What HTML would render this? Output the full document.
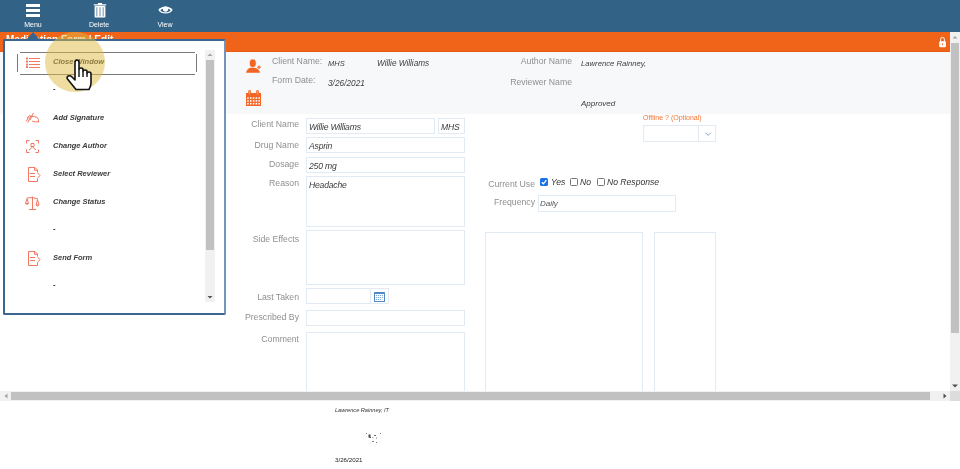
<!DOCTYPE html>
<html><head><meta charset="utf-8">
<style>
*{margin:0;padding:0;box-sizing:border-box}
body{will-change:transform}
html,body{width:960px;height:469px;overflow:hidden;background:#fff;font-family:"Liberation Sans",sans-serif}
.a{position:absolute}
svg{display:block}
#top{left:0;top:0;width:960px;height:32px;background:#336287}
.tl{position:absolute;top:21px;color:#fff;font-size:7px;line-height:8px;text-align:center;width:40px}
#orange{left:0;top:32px;width:950px;height:20px;background:#f0641a;border-bottom:1px solid #e95c12}
#title{left:6px;top:34px;color:#fff;font-size:10px;font-weight:bold;line-height:12px;white-space:nowrap}
#band{left:0;top:52px;width:950px;height:62px;background:#f7f8fa}
.lbl{position:absolute;color:#8f8f8f;font-size:8.7px;line-height:10px;white-space:nowrap}
.rl{text-align:right}
.val{position:absolute;color:#404040;font-style:italic;font-size:8px;line-height:10px;white-space:nowrap}
.inp{position:absolute;border:1px solid #e2eaf4;background:#fff}
.it{position:absolute;color:#3a3a3a;font-style:italic;font-size:8.6px;letter-spacing:-0.2px;line-height:10px;white-space:nowrap}
/* scrollbars */
#vs{left:950px;top:32px;width:10px;height:359px;background:#f1f1f1}
#hs{left:0;top:391px;width:950px;height:10px;background:#f1f1f1}
#corner{left:950px;top:391px;width:10px;height:10px;background:#dcdcdc}
/* popup */
#pop{left:3px;top:39px;width:223px;height:276px;background:#fff;border:2px solid #3a6691;border-right-color:#7296bb;border-radius:2px}
.mi{position:absolute;left:50px;color:#3b3b3b;font-style:italic;font-weight:bold;font-size:7.5px;line-height:10px;white-space:nowrap}
</style></head><body>
<div id="top" class="a">
 <svg class="a" style="left:26px;top:4px" width="14" height="13"><rect x="0" y="0" width="14" height="3" fill="#fff"/><rect x="0" y="5" width="14" height="3" fill="#fff"/><rect x="0" y="10" width="14" height="3" fill="#fff"/></svg>
 <div class="tl" style="left:13px">Menu</div>
 <svg class="a" style="left:93px;top:3px" width="14" height="15" viewBox="0 0 14 15"><path d="M5 0h4v1.2h-4z M0.8 1.2h12.4v1.4H0.8z" fill="#fff"/><rect x="1.6" y="3" width="10.8" height="11.5" rx="0.8" fill="#fff"/><rect x="3.2" y="4.2" width="1.2" height="9.2" fill="#8aa3ba"/><rect x="6.4" y="4.2" width="1.2" height="9.2" fill="#8aa3ba"/><rect x="9.6" y="4.2" width="1.2" height="9.2" fill="#8aa3ba"/></svg>
 <div class="tl" style="left:79px">Delete</div>
 <svg class="a" style="left:158px;top:5px" width="15" height="10" viewBox="0 0 15 10"><path d="M0.3 5C3 0.3 12 0.3 14.7 5C12 9.7 3 9.7 0.3 5Z" fill="#fff"/><path d="M2.3 5.2C4.2 2.8 10.8 2.8 12.7 5.2C10.8 7.9 4.2 7.9 2.3 5.2Z" fill="#336287"/><path d="M4.7 3.2A2.9 2.9 0 0 0 10.3 3.2Z" fill="#fff"/><circle cx="7.5" cy="4.1" r="2.6" fill="#fff"/></svg>
 <div class="tl" style="left:145px">View</div>
</div>
<div id="orange" class="a">
 <svg class="a" style="left:938px;top:4px" width="9" height="12" viewBox="0 0 9 12"><path d="M2.6 6V3.3a1.9 1.9 0 0 1 3.8 0V6" stroke="#fff" stroke-width="1" fill="none"/><rect x="1.2" y="5.3" width="6.8" height="6" rx="1.3" fill="#fff"/><path d="M4 7.5h1.2l-0.3 2h-0.6z" fill="#f26522"/></svg>
</div>
<div id="title" class="a">Medication Form | Edit</div>
<div id="band" class="a">
 <svg class="a" style="left:246px;top:7px" width="16" height="14" viewBox="0 0 16 14"><path d="M0 13.8Q1 8.6 7 8.6Q13 8.6 14 13.8Z" fill="#f26522"/><ellipse cx="6.8" cy="4.2" rx="3.4" ry="4.2" fill="#f26522" stroke="#f7f8fa" stroke-width="0.7"/><path d="M11 8.2H15M13 6.2V10.2" stroke="#f7f8fa" stroke-width="2.6"/><path d="M11.2 8.2H14.8M13 6.4V10" stroke="#f47a40" stroke-width="1.5"/></svg>
 <svg class="a" style="left:246px;top:38px" width="15" height="16" viewBox="0 0 15 16"><rect x="0" y="3" width="15" height="13" fill="#f26522"/><rect x="2.6" y="0.3" width="2" height="4.6" rx="1" fill="#f4a070" stroke="#f26522" stroke-width="0.8"/><rect x="10.5" y="0.3" width="2" height="4.6" rx="1" fill="#f4a070" stroke="#f26522" stroke-width="0.8"/><g fill="#fff"><rect x="1.1" y="7.3" width="1.6" height="1.6"/><rect x="3.95" y="7.3" width="1.6" height="1.6"/><rect x="6.8" y="7.3" width="1.6" height="1.6"/><rect x="9.6" y="7.3" width="1.6" height="1.6"/><rect x="12.4" y="7.3" width="1.6" height="1.6"/><rect x="1.1" y="10.1" width="1.6" height="1.6"/><rect x="3.95" y="10.1" width="1.6" height="1.6"/><rect x="6.8" y="10.1" width="1.6" height="1.6"/><rect x="9.6" y="10.1" width="1.6" height="1.6"/><rect x="12.4" y="10.1" width="1.6" height="1.6"/><rect x="1.1" y="12.9" width="1.6" height="1.6"/><rect x="3.95" y="12.9" width="1.6" height="1.6"/><rect x="6.8" y="12.9" width="1.6" height="1.6"/><rect x="9.6" y="12.9" width="1.6" height="1.6"/><rect x="12.4" y="12.9" width="1.6" height="1.6"/></g></svg>
 <div class="lbl" style="left:272px;top:4px">Client Name:</div>
 <div class="lbl" style="left:272px;top:23px">Form Date:</div>
 <div class="val" style="left:328px;top:7px;font-size:7.5px">MHS</div>
 <div class="val" style="left:377px;top:7px;font-size:8.2px">Willie Williams</div>
 <div class="val" style="left:328px;top:26px;font-size:8.3px">3/26/2021</div>
 <div class="lbl rl" style="left:472px;top:4px;width:100px">Author Name</div>
 <div class="lbl rl" style="left:472px;top:25px;width:100px">Reviewer Name</div>
 <div class="val" style="left:581px;top:7px;font-size:7.7px">Lawrence Rainney,</div>
 <div class="val" style="left:581px;top:47px;font-size:8px">Approved</div>
</div>
<div class="a" style="left:643px;top:114px;color:#f47636;font-size:7px;line-height:8px;white-space:nowrap">Offline ? (Optional)</div>
<div class="inp" style="left:643px;top:125px;width:73px;height:17px"><div class="a" style="left:54px;top:0;width:1px;height:15px;background:#e3e9f0"></div><svg class="a" style="left:61px;top:6px" width="7" height="5"><path d="M0.5 0.7L3.2 3.4L5.9 0.7" stroke="#7f9fc0" stroke-width="0.9" fill="none"/></svg></div>

<div class="a" style="left:0;top:0;width:950px;height:391px;overflow:hidden">
<div class="lbl rl" style="left:199px;top:119px;width:100px">Client Name</div>
<div class="inp" style="left:306px;top:118px;width:129px;height:16px"></div>
<div class="it" style="left:309px;top:122px">Willie Williams</div>
<div class="inp" style="left:438px;top:118px;width:27px;height:16px"></div>
<div class="it" style="left:441px;top:122px">MHS</div>
<div class="lbl rl" style="left:199px;top:140px;width:100px">Drug Name</div>
<div class="inp" style="left:306px;top:137px;width:159px;height:16px"></div>
<div class="it" style="left:309px;top:141px">Asprin</div>
<div class="lbl rl" style="left:199px;top:159px;width:100px">Dosage</div>
<div class="inp" style="left:306px;top:157px;width:159px;height:16px"></div>
<div class="it" style="left:309px;top:161px">250 mg</div>
<div class="lbl rl" style="left:199px;top:178px;width:100px">Reason</div>
<div class="inp" style="left:306px;top:176px;width:159px;height:51px"></div>
<div class="it" style="left:309px;top:180px">Headache</div>
<div class="lbl rl" style="left:199px;top:234px;width:100px">Side Effects</div>
<div class="inp" style="left:306px;top:230px;width:159px;height:55px"></div>
<div class="lbl rl" style="left:199px;top:292px;width:100px">Last Taken</div>
<div class="inp" style="left:306px;top:288px;width:65px;height:16px"></div>
<div class="inp" style="left:370px;top:288px;width:19px;height:16px"></div>
<div class="lbl rl" style="left:199px;top:312px;width:100px">Prescribed By</div>
<div class="inp" style="left:306px;top:310px;width:159px;height:16px"></div>
<div class="lbl rl" style="left:199px;top:334px;width:100px">Comment</div>
<div class="inp" style="left:306px;top:332px;width:159px;height:80px"></div>

<div class="lbl rl" style="left:435px;top:179px;width:100px">Current Use</div>

<svg class="a" style="left:540px;top:178px" width="9" height="8" viewBox="0 0 9 8"><rect x="0" y="0" width="8" height="8" rx="1.5" fill="#1a73e8"/><path d="M1.8 4.2L3.4 5.8L6.4 2.2" stroke="#fff" stroke-width="1.3" fill="none"/></svg>
<div class="it" style="left:551px;top:177px;font-size:8.6px;letter-spacing:0;color:#333">Yes</div>
<div class="a" style="left:570px;top:178px;width:8px;height:8px;border:1px solid #767676;border-radius:1.5px"></div>
<div class="it" style="left:580px;top:177px;font-size:8.6px;letter-spacing:0;color:#333">No</div>
<div class="a" style="left:597px;top:178px;width:8px;height:8px;border:1px solid #767676;border-radius:1.5px"></div>
<div class="it" style="left:607px;top:177px;font-size:8.6px;letter-spacing:0;color:#333">No Response</div>
<svg class="a" style="left:374px;top:292px" width="11" height="10" viewBox="0 0 11 10"><rect x="0" y="0" width="11" height="10" rx="0.5" fill="#5289c2"/><rect x="1" y="2" width="9" height="7" fill="#fff"/><g fill="#7aa6d2"><rect x="1.8" y="3" width="1.2" height="1"/><rect x="3.8" y="3" width="1.2" height="1"/><rect x="5.8" y="3" width="1.2" height="1"/><rect x="7.8" y="3" width="1.2" height="1"/><rect x="1.8" y="5" width="1.2" height="1"/><rect x="3.8" y="5" width="1.2" height="1"/><rect x="5.8" y="5" width="1.2" height="1"/><rect x="7.8" y="5" width="1.2" height="1"/><rect x="1.8" y="7" width="1.2" height="1"/><rect x="3.8" y="7" width="1.2" height="1"/><rect x="5.8" y="7" width="1.2" height="1"/></g></svg>
<div class="lbl rl" style="left:435px;top:197px;width:100px">Frequency</div>
<div class="inp" style="left:538px;top:195px;width:138px;height:17px"></div>
<div class="it" style="left:540px;top:199px;font-size:8px;letter-spacing:0;color:#555">Daily</div>
<div class="inp" style="left:485px;top:232px;width:158px;height:180px"></div>
<div class="inp" style="left:654px;top:232px;width:62px;height:180px"></div>

</div>
<div id="vs" class="a"></div>
<div id="hs" class="a"></div>
<div id="corner" class="a"></div>

<div class="a" style="left:1px;top:392px;width:10px;height:8px"><svg width="10" height="8"><path d="M6.5 1.5L3.5 4L6.5 6.5Z" fill="#a3a3a3"/></svg></div>
<div class="a" style="left:11px;top:392px;width:919px;height:8px;background:#c1c1c1"></div>
<div class="a" style="left:940px;top:392px;width:10px;height:8px"><svg width="10" height="8"><path d="M3.5 1.5L6.5 4L3.5 6.5Z" fill="#505050"/></svg></div>
<div class="a" style="left:950px;top:32px;width:10px;height:10px"><svg width="10" height="10"><path d="M2.5 6.5L5 4L7.5 6.5Z" fill="#a3a3a3"/></svg></div>
<div class="a" style="left:951px;top:43px;width:8px;height:290px;background:#c1c1c1"></div>
<div class="a" style="left:950px;top:381px;width:10px;height:10px"><svg width="10" height="10"><path d="M2 3.5L5 6.5L8 3.5Z" fill="#505050"/></svg></div>

<div class="a" style="left:335px;top:406px;color:#333;font-style:italic;font-size:5.6px;line-height:8px;white-space:nowrap">Lawrence Rainney, IT</div>
<svg class="a" style="left:360px;top:428px" width="26" height="20" viewBox="0 0 26 20">
<g fill="#222"><rect x="6" y="5" width="1" height="1" opacity="0.6"/><rect x="8.5" y="6.5" width="2" height="3" opacity="0.85"/><rect x="9.5" y="9" width="1.5" height="1" opacity="0.7"/><rect x="12" y="9" width="1.5" height="1" opacity="0.35"/><rect x="14" y="7" width="2" height="1" opacity="0.65"/><rect x="20" y="5" width="1" height="1" opacity="0.65"/><rect x="16" y="9" width="1" height="2" opacity="0.3"/><rect x="12" y="13" width="2" height="1" opacity="0.55"/><rect x="16" y="14" width="1" height="1" opacity="0.6"/><rect x="9.5" y="14.5" width="1" height="1" opacity="0.2"/></g></svg>
<div class="a" style="left:335px;top:456px;color:#1a1a1a;font-size:6.2px;line-height:8px;white-space:nowrap">3/26/2021</div>

<div id="pop" class="a"></div>
<div class="a" style="left:26px;top:32px;width:0;height:0;border-left:7px solid transparent;border-right:7px solid transparent;border-bottom:8px solid #35648f"></div>
<div class="a" style="left:20px;top:52px;width:175px;height:1px;background:#7a7a7a"></div><div class="a" style="left:20px;top:74px;width:175px;height:1px;background:#7a7a7a"></div><div class="a" style="left:17px;top:54px;width:1px;height:18px;background:#7a7a7a"></div><div class="a" style="left:196px;top:54px;width:1px;height:18px;background:#7a7a7a"></div>
<svg class="a" style="left:26px;top:57px" width="14" height="11" viewBox="0 0 14 11"><g fill="#f47a64"><rect x="0" y="0.5" width="2" height="2"/><rect x="0" y="3.5" width="2" height="2"/><rect x="0" y="6.5" width="2" height="2"/><rect x="0" y="9" width="2" height="2"/><rect x="3" y="1" width="11" height="1"/><rect x="3" y="4" width="11" height="1"/><rect x="3" y="7" width="11" height="1"/><rect x="3" y="10" width="11" height="1"/></g></svg>
<div class="mi" style="left:53px;top:57px">Close Window</div>
<div class="mi" style="left:53px;top:84px">-</div>
<svg class="a" style="left:25px;top:112px" width="15" height="11" viewBox="0 0 15 11"><g stroke="#f37763" stroke-width="1" fill="none" stroke-linecap="round"><path d="M1.5 9L3.8 4.5M3 10.2L6 3.5M5 8L8.3 1.2M6.5 4.6Q10 4 12.3 5.5Q13.8 7 13.6 9.8M7.5 9.3Q10.5 10.4 13.6 9.8M2.5 5.5L4.5 3.5"/></g></svg>
<div class="mi" style="left:53px;top:113px">Add Signature</div>
<svg class="a" style="left:26px;top:140px" width="13" height="13" viewBox="0 0 13 13"><g stroke="#f37763" stroke-width="1" fill="none"><path d="M0.5 3.5V0.5H3.5M9.5 0.5H12.5V3.5M12.5 9.5V12.5H9.5M3.5 12.5H0.5V9.5"/><path d="M5 3.5H8V6.5H5Z"/><path d="M3 10L6.5 7L10 10"/></g></svg>
<div class="mi" style="left:53px;top:141px">Change Author</div>
<svg class="a" style="left:28px;top:167px" width="13" height="15" viewBox="0 0 13 15"><g stroke="#f37763" stroke-width="1" fill="none"><path d="M9.5 5.5V3L7 0.5H0.5V14.5H9.5V11.5"/><path d="M6.5 0.5V3.3H9.5"/><path d="M2 6.5H7M2 9.5H7M9.5 5.8L12 8.6L9.5 11.4"/></g></svg>
<div class="mi" style="left:53px;top:169px">Select Reviewer</div>
<svg class="a" style="left:25px;top:196px" width="15" height="14" viewBox="0 0 15 14"><g stroke="#f37763" stroke-width="1" fill="none"><path d="M7.5 0.5V13M4 13.5H11M2 2L7.5 1.5L13 3"/><path d="M2 2.5L0.5 7.5H3.5Z M0.5 7.5Q2 9.5 3.5 7.5"/><path d="M12.5 3.5L11 9H14Z M11 9Q12.5 11 14 9"/></g></svg>
<div class="mi" style="left:53px;top:197px">Change Status</div>
<div class="mi" style="left:53px;top:224px">-</div>
<svg class="a" style="left:28px;top:251px" width="13" height="15" viewBox="0 0 13 15"><g stroke="#f37763" stroke-width="1" fill="none"><path d="M9.5 5.5V3L7 0.5H0.5V14.5H9.5V11.5"/><path d="M6.5 0.5V3.3H9.5"/><path d="M2 6.5H7M2 9.5H7M9.5 5.8L12 8.6L9.5 11.4"/></g></svg>
<div class="mi" style="left:53px;top:253px">Send Form</div>
<div class="mi" style="left:53px;top:280px">-</div>
<div class="a" style="left:205px;top:50px;width:10px;height:252px;background:#f1f1f1"></div>
<svg class="a" style="left:205px;top:50px" width="10" height="10"><path d="M2.5 6L5 3.5L7.5 6Z" fill="#a3a3a3"/></svg>
<div class="a" style="left:206px;top:60px;width:8px;height:190px;background:#c1c1c1"></div>
<svg class="a" style="left:205px;top:292px" width="10" height="10"><path d="M2.5 4L5 6.5L7.5 4Z" fill="#505050"/></svg>
<div class="a" style="left:45px;top:32px;width:60px;height:60px;border-radius:50%;background:rgba(221,185,65,0.5)"></div>
<svg class="a" style="left:65px;top:59px" width="28" height="33" viewBox="0 0 28 33"><path d="M10 3.5Q10 1 12 1Q14 1 14 3.5V10.5Q14 9 16 9Q18 9 18 10.5V12.5Q18 11 20 11Q22 11 22 12.5V14.5Q22 13 24 13Q26 13 26 15V24Q26 27 24 30.5H11L2.5 20Q1.3 18 3.3 17Q5 16.2 7 18L10 21Z" fill="#fff" stroke="#111" stroke-width="1.6" stroke-linejoin="round"/><path d="M14 10.5V18M18 12.5V18M22 14.5V18" stroke="#111" stroke-width="1.4"/></svg>

</body></html>
